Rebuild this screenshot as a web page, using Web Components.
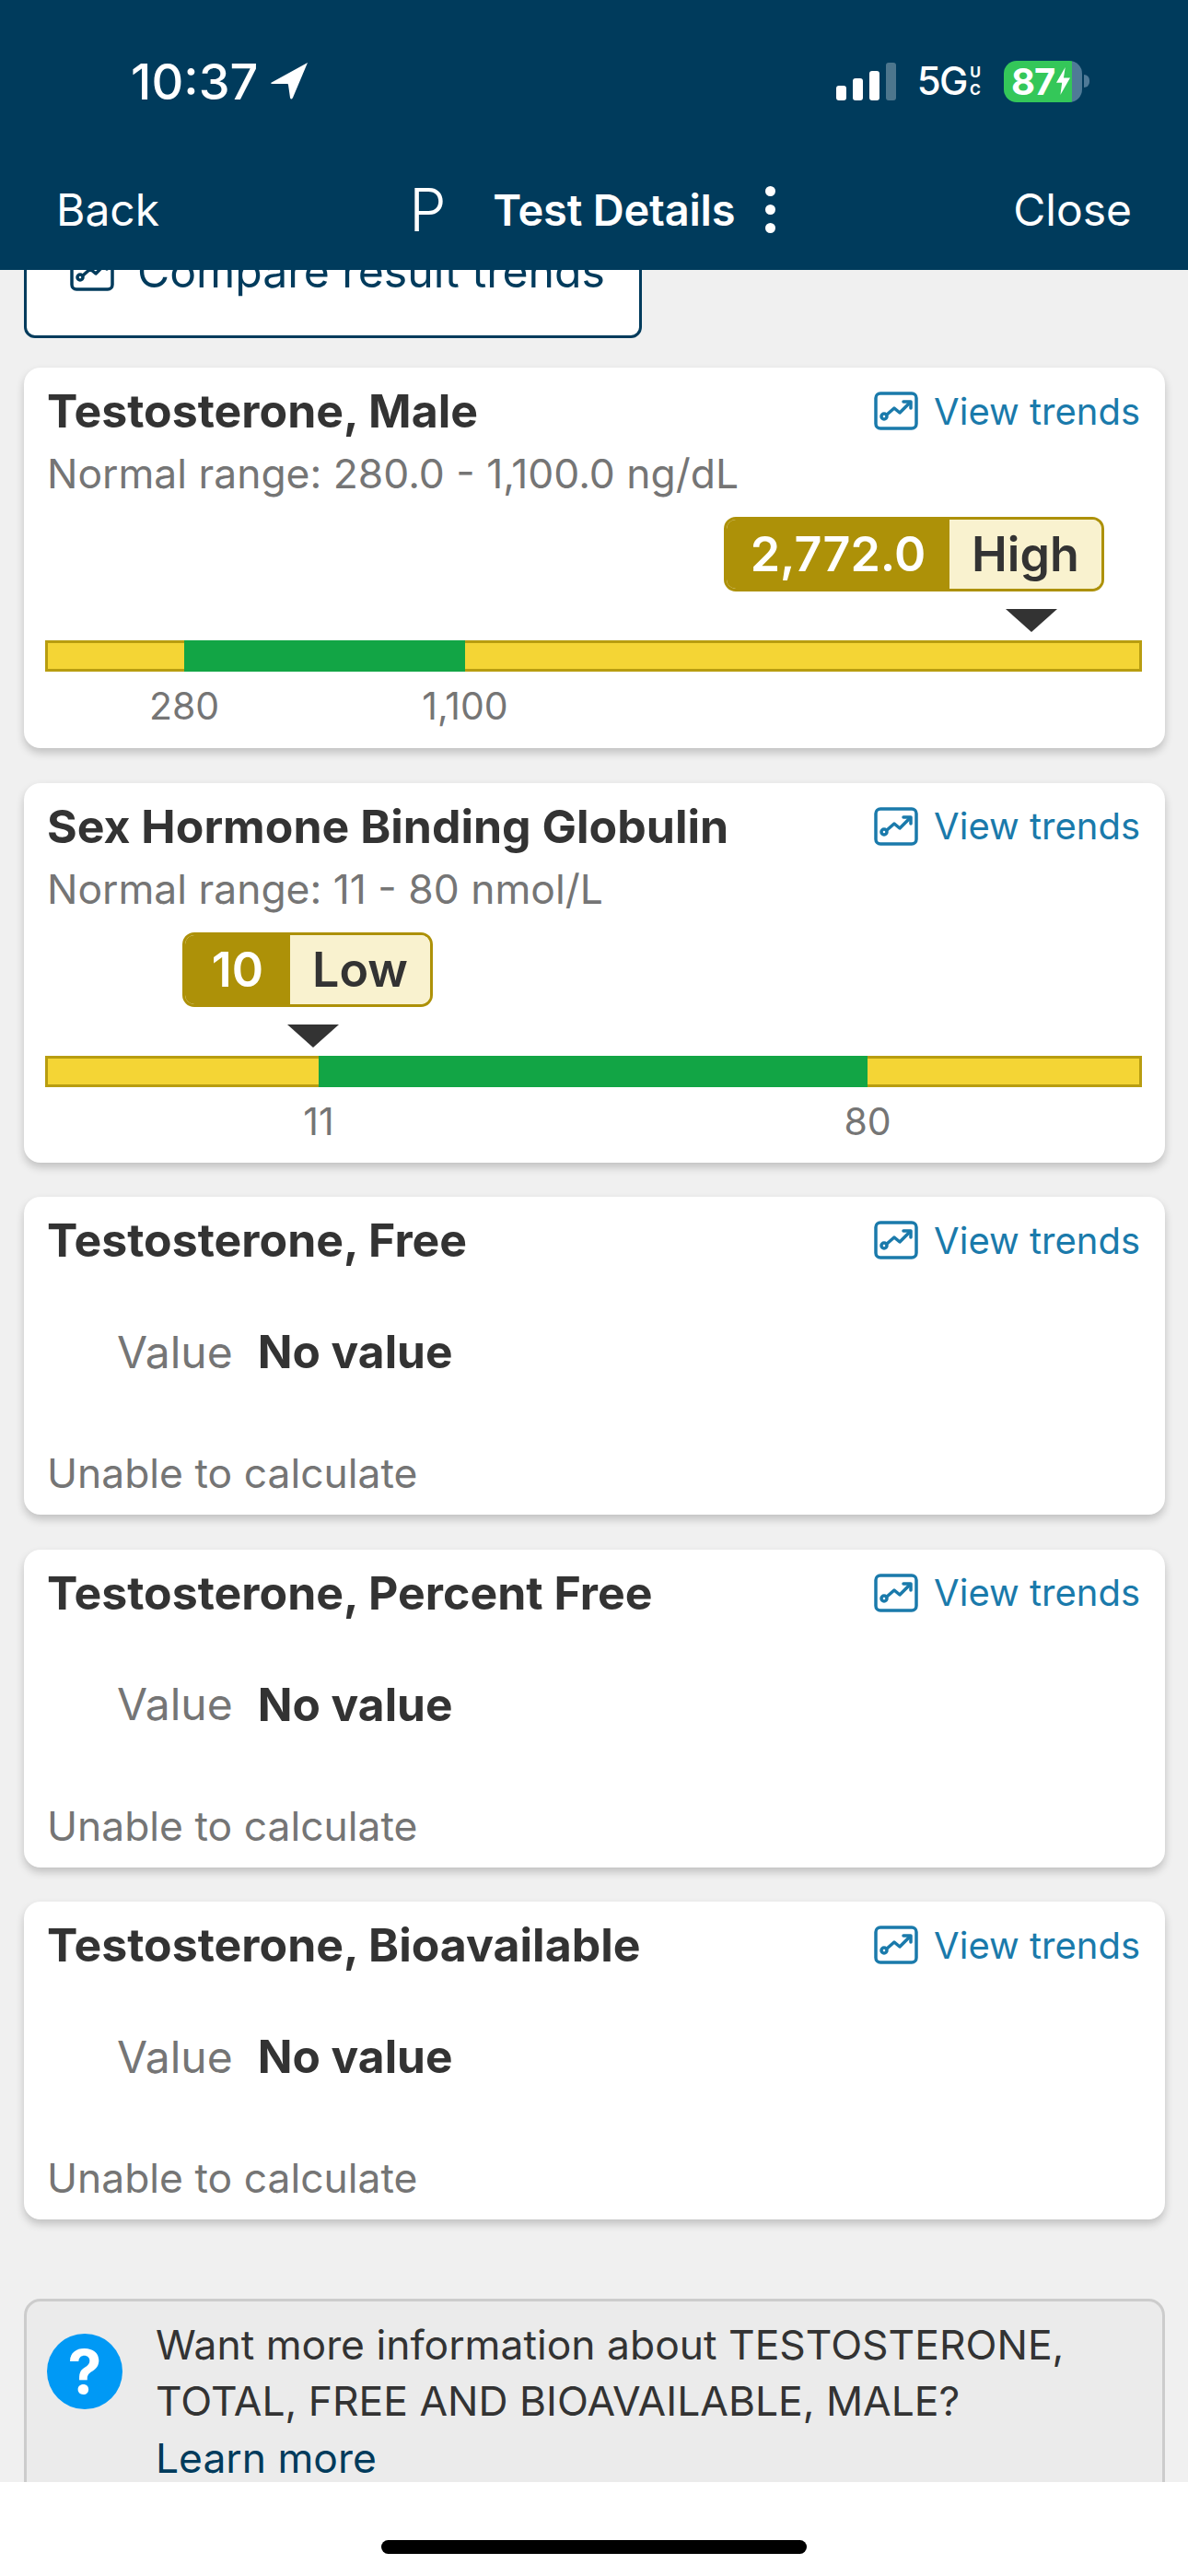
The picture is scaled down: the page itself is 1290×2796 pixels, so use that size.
<!DOCTYPE html>
<html lang="en">
<head>
<meta charset="utf-8">
<title>Test Details</title>
<style>
    html, body { margin: 0; padding: 0; }
    body {
        width: 1290px;
        height: 2796px;
        overflow: hidden;
        display: flex;
        flex-direction: column;
        background: #fff;
        font-family: Inter, "Liberation Sans", sans-serif;
        color: #333;
    }
</style>
</head>
<body>

<app-header></app-header>

<page-content>
    <trends-button>Compare result trends</trends-button>

    <result-card style="height: 413px">
        <span slot="name">Testosterone, Male</span>
        <range-note>Normal range: 280.0 - 1,100.0 ng/dL</range-note>
        <range-bar start="151" middle="305" end="735" low="280" high="1,100"
                   pill-left="737" arrow-left="1043" value="2,772.0" flag="High" value-width="242"></range-bar>
    </result-card>

    <result-card style="height: 412px">
        <span slot="name">Sex Hormone Binding Globulin</span>
        <range-note>Normal range: 11 - 80 nmol/L</range-note>
        <range-bar start="297" middle="596" end="298" low="11" high="80"
                   pill-left="149" arrow-left="263" value="10" flag="Low" value-width="114"></range-bar>
    </result-card>

    <result-card style="height: 345px">
        <span slot="name">Testosterone, Free</span>
        <empty-value></empty-value>
    </result-card>

    <result-card style="height: 345px">
        <span slot="name">Testosterone, Percent Free</span>
        <empty-value></empty-value>
    </result-card>

    <result-card style="height: 345px">
        <span slot="name">Testosterone, Bioavailable</span>
        <empty-value></empty-value>
    </result-card>

    <info-box>
        Want more information about TESTOSTERONE, TOTAL, FREE AND BIOAVAILABLE, MALE?
        <span slot="link">Learn more</span>
    </info-box>
</page-content>

<home-bar></home-bar>

<script>
// Top bar: phone status row and the app's nav row
class AppHeader extends HTMLElement {
    constructor() {
        super();
        this.attachShadow({ mode: "open" });
        this.shadowRoot.innerHTML = `
            <style>
                :host {
                    display: block;
                    flex: none;
                    height: 293px;
                    background: #003b5c;
                    color: #fff;
                    position: relative;
                    z-index: 2;
                }
                .status {
                    padding: 60px 107px 0 142px;
                    display: flex;
                    align-items: center;
                    justify-content: space-between;
                    height: 56px;
                }
                .time {
                    display: flex;
                    align-items: center;
                    gap: 14px;
                    font-size: 54px;
                    font-weight: 500;
                }
                .right { display: flex; align-items: center; }
                .signal { display: flex; align-items: flex-end; gap: 7px; height: 41px; }
                .signal i { display: block; width: 11px; background: #fff; border-radius: 3px; }
                .five-g { margin-left: 23px; font-size: 42px; font-weight: 500; letter-spacing: -1.5px; line-height: 1; }
                .uc {
                    margin-left: 2px;
                    display: flex;
                    flex-direction: column;
                    font-size: 16px;
                    font-weight: 700;
                    line-height: 19px;
                    text-align: center;
                    width: 14px;
                }
                .battery {
                    margin-left: 24px;
                    width: 85px;
                    height: 45px;
                    border-radius: 14px;
                    background: linear-gradient(90deg, #34c759 0, #34c759 74px, #4f7a97 74px);
                    display: flex;
                    align-items: center;
                    padding-left: 8px;
                    box-sizing: border-box;
                    font-size: 40px;
                    font-weight: 700;
                    letter-spacing: -1px;
                }
                .battery svg { margin-left: 2px; flex: none; }
                .nub { width: 6px; height: 14px; margin-left: 2px; background: #4f7a97; border-radius: 0 7px 7px 0; }
                nav {
                    margin-top: 79px;
                    padding: 0 61px 0 61px;
                    height: 64px;
                    display: flex;
                    align-items: center;
                    font-size: 48px;
                }
                .middle { margin-left: 271px; display: flex; align-items: center; }
                .p { font-size: 64px; font-weight: 300; margin-right: 51px; }
                .heading { font-weight: 600; font-size: 47px; letter-spacing: -.2px; }
                .dots { margin-left: 33px; display: flex; flex-direction: column; gap: 9px; }
                .dots i { display: block; width: 11px; height: 11px; background: #fff; border-radius: 50%; }
                .close { margin-left: auto; }
            </style>
            <div class="status">
                <div class="time">10:37
                    <svg width="40" height="40" viewBox="0 0 40 40"><path d="M40 0 L0 22 Q0 23 2 23 L18 23 Q19 23 19 24 L21 38 Q22 41 24 38 Z" fill="#fff"/></svg>
                </div>
                <div class="right">
                    <div class="signal">
                        <i style="height: 16px"></i><i style="height: 24px"></i><i style="height: 32px"></i><i style="height: 41px; opacity: .3"></i>
                    </div>
                    <span class="five-g">5G</span>
                    <span class="uc"><span>U</span><span>C</span></span>
                    <div class="battery">87
                        <svg width="15" height="30" viewBox="0 0 17 34"><path d="M11 0 L0 19 L7 19 L5 34 L17 13 L9 13 Z" fill="#fff"/></svg>
                    </div>
                    <div class="nub"></div>
                </div>
            </div>
            <nav>
                <span>Back</span>
                <div class="middle">
                    <span class="p">P</span>
                    <span class="heading">Test Details</span>
                    <span class="dots"><i></i><i></i><i></i></span>
                </div>
                <span class="close">Close</span>
            </nav>
        `;
    }
}

// Grey scroll area, clipped under the header and above the home bar
class PageContent extends HTMLElement {
    constructor() {
        super();
        this.attachShadow({ mode: "open" });
        this.shadowRoot.innerHTML = `
            <style>
                :host {
                    display: block;
                    height: 2401px;
                    flex: none;
                    overflow: hidden;
                    background: #f0f0f0;
                }
                .list {
                    display: flex;
                    flex-direction: column;
                    gap: 37.5px;
                    padding: 0 25px 0 26px;
                }
            </style>
            <div class="list"><slot></slot></div>
        `;
    }
}

const trendIcon = (color, stroke) => `
    <svg width="48" height="42" viewBox="0 0 48 42" fill="none" stroke="${color}" stroke-width="${stroke}" stroke-linecap="round" stroke-linejoin="round">
        <rect x="2" y="2" width="44" height="38" rx="5"/>
        <circle cx="11" cy="27" r="3"/>
        <path d="M14 25 L22 18 L28 23 L39 12"/>
        <path d="M32 11 L40 11 L40 18"/>
    </svg>`;

class TrendsButton extends HTMLElement {
    constructor() {
        super();
        this.attachShadow({ mode: "open" });
        this.shadowRoot.innerHTML = `
            <style>
                :host {
                    display: flex;
                    align-items: flex-start;
                    gap: 25px;
                    box-sizing: border-box;
                    width: 671px;
                    height: 120px;
                    margin-top: -46px;
                    margin-bottom: -5.5px;
                    padding: 17px 0 0 47px;
                    background: #fff;
                    border: 3px solid #003b5c;
                    border-radius: 12px;
                    color: #003b5c;
                    font-size: 48.2px;
                    line-height: 56px;
                }
                svg { margin-top: 7px; flex: none; }
            </style>
            ${trendIcon("#003b5c", 3.5)}
            <span><slot></slot></span>
        `;
    }
}

class ResultCard extends HTMLElement {
    constructor() {
        super();
        this.attachShadow({ mode: "open" });
        this.shadowRoot.innerHTML = `
            <style>
                :host {
                    display: flex;
                    flex-direction: column;
                    box-sizing: border-box;
                    background: #fff;
                    border-radius: 18px;
                    box-shadow: 0 5px 10px rgba(0, 0, 0, .2);
                    padding: 19px 25px 0 23px;
                }
                header {
                    display: flex;
                    justify-content: space-between;
                    align-items: center;
                    height: 56px;
                    padding-left: 3px;
                }
                .name { font-size: 50px; font-weight: 700; margin-left: -1px; }
                .trends {
                    display: flex;
                    align-items: center;
                    gap: 17px;
                    color: #1a7aab;
                    font-size: 40px;
                    padding-right: 2px;
                }
            </style>
            <header>
                <span class="name"><slot name="name"></slot></span>
                <span class="trends">${trendIcon("#1a7aab", 3.5)}<span>View trends</span></span>
            </header>
            <slot></slot>
        `;
    }
}

class RangeNote extends HTMLElement {
    constructor() {
        super();
        this.attachShadow({ mode: "open" });
        this.shadowRoot.innerHTML = `
            <style>
                :host {
                    display: block;
                    margin-top: 13px;
                    padding-left: 2px;
                    color: #757575;
                    font-size: 44.4px;
                    line-height: 54px;
                }
            </style>
            <slot></slot>
        `;
    }
}

// Value pill, pointer, coloured range bar and tick labels
class RangeBar extends HTMLElement {
    constructor() {
        super();
        this.attachShadow({ mode: "open" });
    }

    connectedCallback() {
        const a = this.getAttribute.bind(this);
        this.shadowRoot.innerHTML = `
            <style>
                :host { display: block; margin-top: 20px; }
                .pill {
                    display: inline-flex;
                    margin-left: ${a("pill-left")}px;
                    height: 81px;
                    box-sizing: border-box;
                    border: 3px solid #ad9108;
                    border-radius: 13px;
                    overflow: hidden;
                    font-size: 52px;
                    font-weight: 600;
                    vertical-align: top;
                }
                .value {
                    width: ${a("value-width")}px;
                    background: #ad9108;
                    color: #fff;
                    display: flex;
                    align-items: center;
                    justify-content: center;
                }
                .flag {
                    padding: 0 24px;
                    background: #f9f2cf;
                    color: #333;
                    display: flex;
                    align-items: center;
                }
                .arrow {
                    display: block;
                    margin: 19px 0 9px ${a("arrow-left")}px;
                    width: 0;
                    height: 0;
                    border-left: 28px solid transparent;
                    border-right: 28px solid transparent;
                    border-top: 25px solid #333;
                }
                .bar { display: flex; height: 34px; }
                .bar div { box-sizing: border-box; }
                .yellow { background: #f4d535; border: 3px solid #b89d10; }
                .green { background: #12a545; }
                .ticks {
                    display: flex;
                    margin-top: 13px;
                    color: #757575;
                    font-size: 41px;
                    line-height: 48px;
                }
                .tick { width: 0; display: flex; justify-content: center; }
            </style>
            <div class="pill"><span class="value">${a("value")}</span><span class="flag">${a("flag")}</span></div>
            <span class="arrow"></span>
            <div class="bar">
                <div class="yellow" style="width: ${a("start")}px; border-right: 0"></div>
                <div class="green" style="width: ${a("middle")}px"></div>
                <div class="yellow" style="width: ${a("end")}px; border-left: 0"></div>
            </div>
            <div class="ticks">
                <span style="width: ${a("start")}px"></span>
                <span class="tick">${a("low")}</span>
                <span style="width: ${a("middle")}px"></span>
                <span class="tick">${a("high")}</span>
            </div>
        `;
    }
}

class EmptyValue extends HTMLElement {
    constructor() {
        super();
        this.attachShadow({ mode: "open" });
        this.shadowRoot.innerHTML = `
            <style>
                :host {
                    display: flex;
                    flex-direction: column;
                    flex: 1;
                    padding: 0 0 0 2px;
                }
                .row {
                    display: flex;
                    align-items: center;
                    gap: 27px;
                    margin: 62px 0 0 76px;
                    height: 62px;
                    color: #757575;
                    font-size: 48px;
                }
                b { color: #333; font-size: 49.6px; font-weight: 700; }
                .note {
                    margin-top: auto;
                    margin-bottom: 18px;
                    color: #757575;
                    font-size: 44.4px;
                    line-height: 54px;
                }
            </style>
            <div class="row"><span>Value</span><b>No value</b></div>
            <div class="note">Unable to calculate</div>
        `;
    }
}

class InfoBox extends HTMLElement {
    constructor() {
        super();
        this.attachShadow({ mode: "open" });
        this.shadowRoot.innerHTML = `
            <style>
                :host {
                    display: flex;
                    gap: 36px;
                    box-sizing: border-box;
                    margin-top: 48px;
                    height: 240px;
                    padding: 17px 30px 0 22px;
                    background: #ebebeb;
                    border: 3px solid #ccc;
                    border-radius: 18px;
                    font-size: 44.4px;
                    line-height: 61.5px;
                }
                .mark {
                    flex: none;
                    width: 82px;
                    height: 82px;
                    margin-top: 18px;
                    border-radius: 50%;
                    background: #0099f5;
                    color: #fff;
                    font-size: 66px;
                    font-weight: 700;
                    line-height: 82px;
                    text-align: center;
                }
                .link { display: block; color: #003b5c; }
            </style>
            <div class="mark">?</div>
            <div><slot></slot><span class="link"><slot name="link"></slot></span></div>
        `;
    }
}

class HomeBar extends HTMLElement {
    constructor() {
        super();
        this.attachShadow({ mode: "open" });
        this.shadowRoot.innerHTML = `
            <style>
                :host {
                    display: flex;
                    flex: 1;
                    justify-content: center;
                    align-items: flex-start;
                    padding-top: 63px;
                    background: #fff;
                }
                div { width: 462px; height: 15px; border-radius: 8px; background: #000; }
            </style>
            <div></div>
        `;
    }
}

customElements.define("app-header", AppHeader);
customElements.define("page-content", PageContent);
customElements.define("trends-button", TrendsButton);
customElements.define("result-card", ResultCard);
customElements.define("range-note", RangeNote);
customElements.define("range-bar", RangeBar);
customElements.define("empty-value", EmptyValue);
customElements.define("info-box", InfoBox);
customElements.define("home-bar", HomeBar);
</script>
</body>
</html>
